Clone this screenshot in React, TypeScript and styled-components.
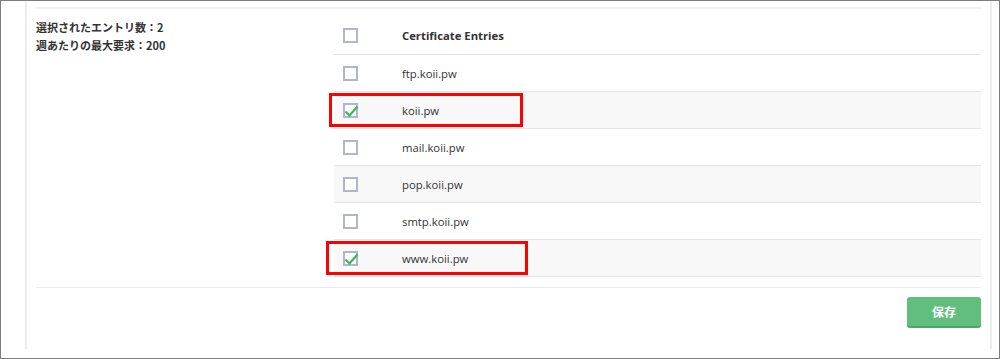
import React from 'react';
import styled, { createGlobalStyle } from 'styled-components';

const GlobalStyle = createGlobalStyle`
  html, body {
    margin: 0;
    padding: 0;
    background: #fff;
  }
  body {
    font-family: 'Open Sans', 'Noto Sans CJK JP', sans-serif;
    color: #333;
  }
`;

interface Entry {
  name: string;
  checked: boolean;
  mark?: { left: number; width: number };
}

const entries: Entry[] = [
  { name: 'ftp.koii.pw', checked: false },
  { name: 'koii.pw', checked: true, mark: { left: -5, width: 194 } },
  { name: 'mail.koii.pw', checked: false },
  { name: 'pop.koii.pw', checked: false },
  { name: 'smtp.koii.pw', checked: false },
  { name: 'www.koii.pw', checked: true, mark: { left: -8, width: 202 } },
];

const Check = ({ checked }: { checked: boolean }) => (
  <Box>
    {checked && (
      <Tick width="15" height="13" viewBox="0 0 15 13">
        <path d="M1.5 6.5 L5.5 10.5 L13.5 1.5" fill="none" stroke="#3bb560" strokeWidth="2.2" />
      </Tick>
    )}
  </Box>
);

export default () => (
  <>
    <GlobalStyle />
    <Frame>
      <Panel>
        <Divider />
        <Section>
          <Summary>
            <div>選択されたエントリ数：2</div>
            <div>週あたりの最大要求：200</div>
          </Summary>
          <Table>
            <Row>
              <CheckCell>
                <Check checked={false} />
              </CheckCell>
              <HeadText>Certificate Entries</HeadText>
            </Row>
            {entries.map((e, i) => (
              <Row key={e.name} striped={i % 2 === 1}>
                <CheckCell>
                  <Check checked={e.checked} />
                </CheckCell>
                <span>{e.name}</span>
                {e.mark && <Mark style={{ left: e.mark.left, width: e.mark.width }} />}
              </Row>
            ))}
          </Table>
        </Section>
        <Footer>
          <SaveButton>保存</SaveButton>
        </Footer>
      </Panel>
    </Frame>
  </>
);

const Frame = styled.div`
  width: 1000px;
  height: 359px;
  box-sizing: border-box;
  border: 1px solid #7d7d7d;
  padding-left: 24px;
  overflow: hidden;
`;

const Panel = styled.div`
  width: 967px;
  height: 348px;
  box-sizing: border-box;
  border-left: 2px solid #ececec;
  border-right: 2px solid #ececec;
  padding: 6px 9px 0 9px;
`;

const Divider = styled.div`
  height: 2px;
  background: #f1f1f1;
`;

const Section = styled.div`
  display: flex;
  padding-top: 8px;
  padding-bottom: 10px;
  border-bottom: 1px solid #ececec;
`;

const Summary = styled.div`
  width: 298px;
  padding-top: 1px;
  font-family: 'Noto Sans CJK JP', sans-serif;
  font-size: 11px;
  font-weight: 700;
  line-height: 18px;
  color: #333;
`;

const Table = styled.div`
  flex: 1;
  border-bottom: 1px solid #e4e4e4;
`;

const Row = styled.div<{ striped?: boolean }>`
  position: relative;
  display: flex;
  align-items: center;
  height: 37px;
  box-sizing: border-box;
  font-size: 11.3px;
  color: #333;
  background: ${(p) => (p.striped ? '#f8f8f8' : '#fff')};
  & + & {
    border-top: 1px solid #e4e4e4;
  }
`;

const CheckCell = styled.div`
  width: 68px;
  padding-left: 9px;
  box-sizing: border-box;
  display: flex;
  align-items: center;
`;

const Box = styled.div`
  position: relative;
  width: 15px;
  height: 15px;
  box-sizing: border-box;
  border: 2px solid #b3b6c6;
  background: #fff;
`;

const Tick = styled.svg`
  position: absolute;
  left: -1px;
  top: 0px;
`;

const HeadText = styled.span`
  font-weight: 700;
  font-size: 11.3px;
`;

const Mark = styled.div`
  position: absolute;
  top: 1px;
  height: 34px;
  box-sizing: border-box;
  border: 3px solid #ff0000;
  pointer-events: none;
`;

const Footer = styled.div`
  display: flex;
  justify-content: flex-end;
  padding-top: 9px;
`;

const SaveButton = styled.button`
  width: 74px;
  height: 31px;
  border: none;
  border-bottom: 2px solid #4aa767;
  border-radius: 3px;
  background: #61bf7e;
  color: #fff;
  font-family: 'Noto Sans CJK JP', sans-serif;
  font-weight: 700;
  font-size: 12px;
  cursor: pointer;
`;
